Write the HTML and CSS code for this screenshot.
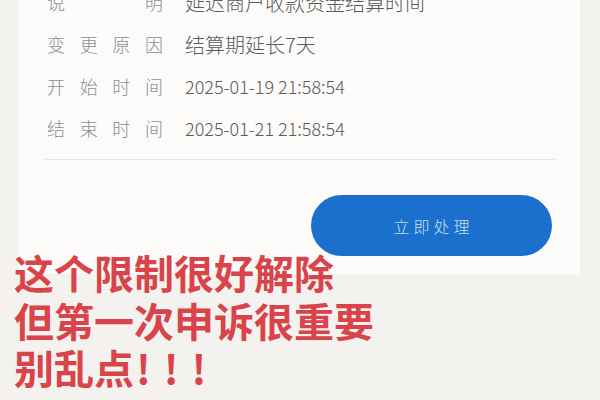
FILE: index.html
```html
<!DOCTYPE html>
<html lang="zh">
<head>
<meta charset="utf-8">
<link rel="stylesheet" href="styles.css">
</head>
<body>
<div class="page">
  <div class="card">
    <div class="row"><span class="label"><b>说</b><b>明</b></span><span class="value">延迟商户收款资金结算时间</span></div>
    <div class="row"><span class="label"><b>变</b><b>更</b><b>原</b><b>因</b></span><span class="value">结算期延长7天</span></div>
    <div class="row"><span class="label"><b>开</b><b>始</b><b>时</b><b>间</b></span><span class="value date">2025-01-19 21:58:54</span></div>
    <div class="row"><span class="label"><b>结</b><b>束</b><b>时</b><b>间</b></span><span class="value date">2025-01-21 21:58:54</span></div>
    <div class="divider"></div>
    <div class="actions"><button class="btn">立即处理</button></div>
  </div>
  <div class="caption">
    <p>这个限制很好解除</p>
    <p>但第一次申诉很重要</p>
    <p>别乱点<span class="bang">!!!</span></p>
  </div>
</div>
</body>
</html>
```

FILE: styles.css
```css
* { box-sizing: border-box; }
html, body { margin: 0; padding: 0; }
body {
  width: 600px;
  height: 400px;
  overflow: hidden;
  background: #f4f2ee;
  font-family: "Noto Sans CJK SC", "Noto Sans", sans-serif;
}
.page {
  position: relative;
  display: flow-root;
  height: 400px;
}
.card {
  margin: -19px 20px 0 18px;
  background: #fcfbf9;
  padding: 0 25px 18px 29px;
}
.row {
  height: 42px;
  display: flex;
  align-items: center;
}
.label {
  width: 116px;
  display: flex;
  justify-content: space-between;
  color: #8e8e8e;
  font-size: 18px;
  font-weight: 300;
}
.label b { font-weight: 300; }
.value {
  margin-left: 22px;
  color: #5a5a5a;
  font-size: 20px;
  font-weight: 300;
}
.value.date {
  font-size: 18px;
}
.divider {
  margin-top: 10px;
  margin-left: -2px;
  border-top: 1px solid #e9e7e3;
}
.actions {
  display: flex;
  justify-content: flex-end;
  margin-top: 35px;
  padding-right: 3px;
}
.btn {
  width: 241px;
  height: 61px;
  border: 0;
  border-radius: 31px;
  background: #1a70cc;
  color: #c4e2ea;
  font-family: "Noto Sans CJK SC", sans-serif;
  font-size: 16px;
  font-weight: 300;
  letter-spacing: 4px;
  padding: 0 0 0 4px;
}
.caption {
  position: absolute;
  left: 14px;
  top: 249px;
  color: #d9434a;
  font-size: 40px;
  font-weight: 700;
  line-height: 47.5px;
}
.caption p { margin: 0; }
.bang {
  letter-spacing: 13px;
  margin-left: 2px;
}
```
